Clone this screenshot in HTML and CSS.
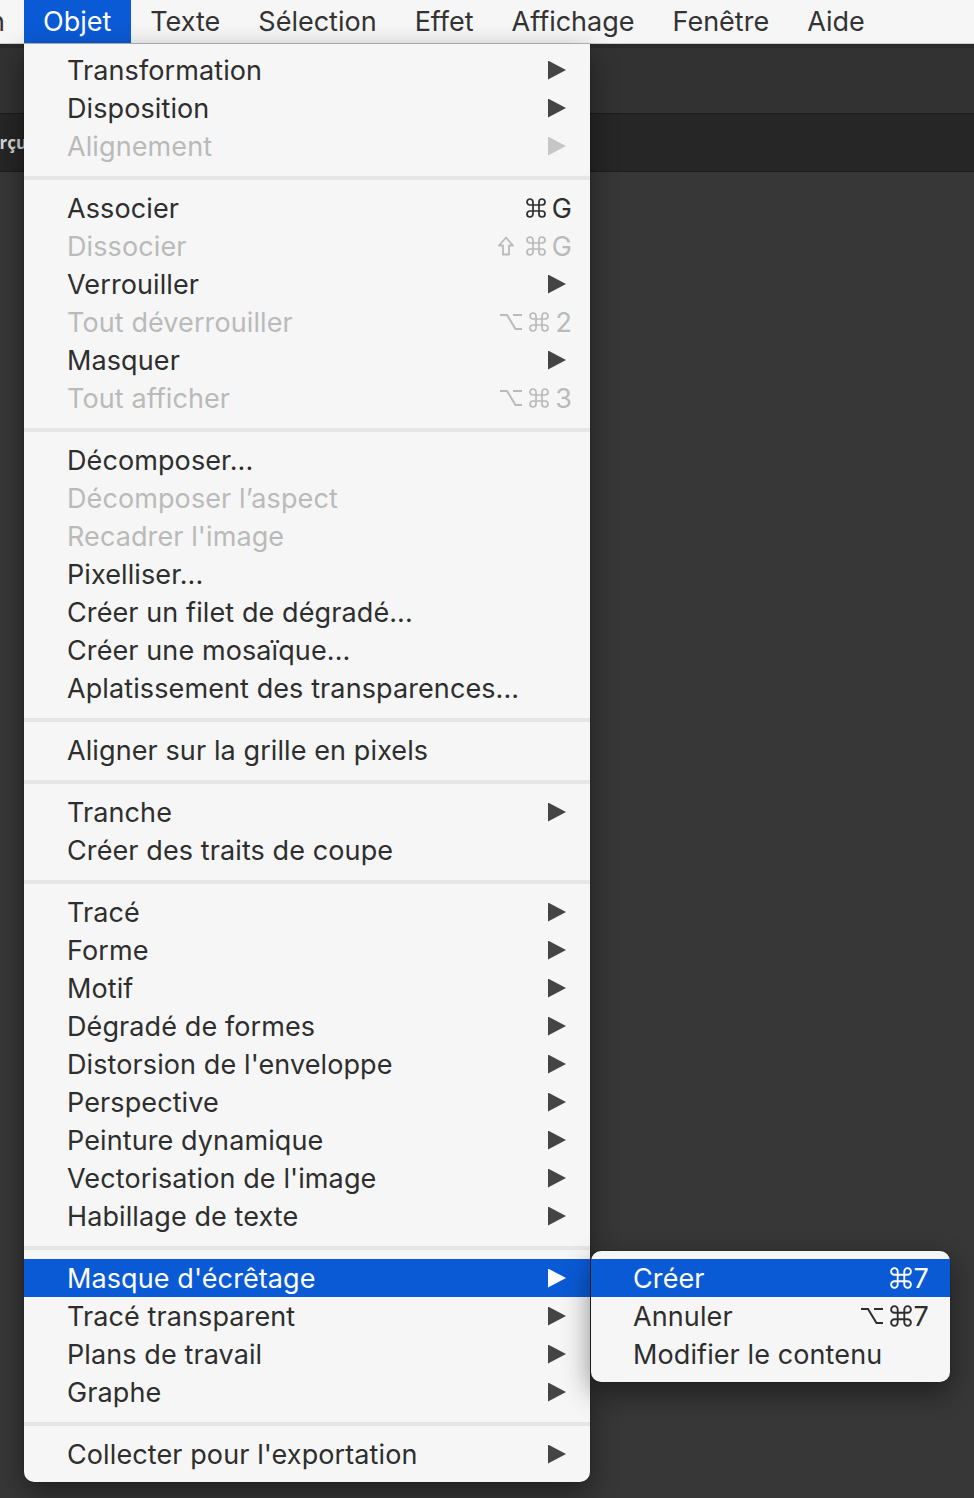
FILE: index.html
```html
<!DOCTYPE html>
<html lang="fr">
<head>
<meta charset="utf-8">
<title>Objet</title>
<link rel="stylesheet" href="styles.css">
</head>
<body>
<header class="menubar">
  <span class="mb-item mb-clipped"><span>Édition</span></span>
  <span class="mb-item active">Objet</span>
  <span class="mb-item">Texte</span>
  <span class="mb-item">Sélection</span>
  <span class="mb-item">Effet</span>
  <span class="mb-item">Affichage</span>
  <span class="mb-item">Fenêtre</span>
  <span class="mb-item">Aide</span>
</header>

<div class="workspace">
  <div class="control-edge"></div>
  <div class="control-bar"></div>
  <div class="tab-bar"><span class="tab-title">Aperçu GPU</span></div>
  <div class="canvas"></div>
</div>

<svg width="0" height="0" class="defs" aria-hidden="true">
  <defs>
    <symbol id="cmd" viewBox="-1 -1 20 20">
      <path d="M6 6 V3 A3 3 0 1 0 3 6 H15 A3 3 0 1 0 12 3 V15 A3 3 0 1 0 15 12 H3 A3 3 0 1 0 6 15 Z" fill="none" stroke="currentColor" stroke-width="1.7" stroke-linejoin="round"/>
    </symbol>
    <symbol id="opt" viewBox="0 0 24 18">
      <path d="M1 2 H8 L16.5 16 H23 M14 2 H23" fill="none" stroke="currentColor" stroke-width="2"/>
    </symbol>
    <symbol id="shift" viewBox="0 0 16 20">
      <path d="M8 1.5 L15 9.5 H11 V18.5 H5 V9.5 H1 Z" fill="none" stroke="currentColor" stroke-width="1.8" stroke-linejoin="round"/>
    </symbol>
  </defs>
</svg>

<nav class="dropdown">
  <div class="group">
    <div class="item"><span class="label">Transformation</span><span class="arrow"></span></div>
    <div class="item"><span class="label">Disposition</span><span class="arrow"></span></div>
    <div class="item disabled"><span class="label">Alignement</span><span class="arrow"></span></div>
  </div>
  <div class="sep"></div>
  <div class="group">
    <div class="item"><span class="label">Associer</span><span class="sc"><svg class="k-cmd"><use href="#cmd"/></svg><span class="key">G</span></span></div>
    <div class="item disabled"><span class="label">Dissocier</span><span class="sc"><svg class="k-shift"><use href="#shift"/></svg><svg class="k-cmd"><use href="#cmd"/></svg><span class="key">G</span></span></div>
    <div class="item"><span class="label">Verrouiller</span><span class="arrow"></span></div>
    <div class="item disabled"><span class="label">Tout déverrouiller</span><span class="sc"><svg class="k-opt"><use href="#opt"/></svg><svg class="k-cmd"><use href="#cmd"/></svg><span class="key">2</span></span></div>
    <div class="item"><span class="label">Masquer</span><span class="arrow"></span></div>
    <div class="item disabled"><span class="label">Tout afficher</span><span class="sc"><svg class="k-opt"><use href="#opt"/></svg><svg class="k-cmd"><use href="#cmd"/></svg><span class="key">3</span></span></div>
  </div>
  <div class="sep"></div>
  <div class="group">
    <div class="item"><span class="label">Décomposer...</span></div>
    <div class="item disabled"><span class="label">Décomposer l’aspect</span></div>
    <div class="item disabled"><span class="label">Recadrer l'image</span></div>
    <div class="item"><span class="label">Pixelliser...</span></div>
    <div class="item"><span class="label">Créer un filet de dégradé...</span></div>
    <div class="item"><span class="label">Créer une mosaïque...</span></div>
    <div class="item"><span class="label">Aplatissement des transparences...</span></div>
  </div>
  <div class="sep"></div>
  <div class="group">
    <div class="item"><span class="label">Aligner sur la grille en pixels</span></div>
  </div>
  <div class="sep"></div>
  <div class="group">
    <div class="item"><span class="label">Tranche</span><span class="arrow"></span></div>
    <div class="item"><span class="label">Créer des traits de coupe</span></div>
  </div>
  <div class="sep"></div>
  <div class="group">
    <div class="item"><span class="label">Tracé</span><span class="arrow"></span></div>
    <div class="item"><span class="label">Forme</span><span class="arrow"></span></div>
    <div class="item"><span class="label">Motif</span><span class="arrow"></span></div>
    <div class="item"><span class="label">Dégradé de formes</span><span class="arrow"></span></div>
    <div class="item"><span class="label">Distorsion de l'enveloppe</span><span class="arrow"></span></div>
    <div class="item"><span class="label">Perspective</span><span class="arrow"></span></div>
    <div class="item"><span class="label">Peinture dynamique</span><span class="arrow"></span></div>
    <div class="item"><span class="label">Vectorisation de l'image</span><span class="arrow"></span></div>
    <div class="item"><span class="label">Habillage de texte</span><span class="arrow"></span></div>
  </div>
  <div class="sep"></div>
  <div class="group">
    <div class="item selected has-sub"><span class="label">Masque d'écrêtage</span><span class="arrow"></span>
      <div class="submenu">
        <div class="item selected"><span class="label">Créer</span><span class="sc"><svg class="k-cmd wide"><use href="#cmd"/></svg><span class="key">7</span></span></div>
        <div class="item"><span class="label">Annuler</span><span class="sc"><svg class="k-opt"><use href="#opt"/></svg><svg class="k-cmd wide"><use href="#cmd"/></svg><span class="key">7</span></span></div>
        <div class="item"><span class="label">Modifier le contenu</span></div>
      </div>
    </div>
    <div class="item"><span class="label">Tracé transparent</span><span class="arrow"></span></div>
    <div class="item"><span class="label">Plans de travail</span><span class="arrow"></span></div>
    <div class="item"><span class="label">Graphe</span><span class="arrow"></span></div>
  </div>
  <div class="sep"></div>
  <div class="group">
    <div class="item"><span class="label">Collecter pour l'exportation</span><span class="arrow"></span></div>
  </div>
</nav>
</body>
</html>
```
FILE: styles.css
```css
* { box-sizing: border-box; }

html, body {
  margin: 0;
  height: 100%;
}

body {
  background: #363636;
  font-family: "Inter", "Roboto", "DejaVu Sans", sans-serif;
  overflow: hidden;
  position: relative;
}

.defs {
  position: absolute;
  width: 0;
  height: 0;
}

/* ---------- menu bar ---------- */
.menubar {
  height: 44px;
  display: flex;
  align-items: stretch;
  background: #f6f6f6;
  border-bottom: 1px solid #cfcfcf;
  font-size: 27px;
  color: #333;
  white-space: nowrap;
}

.mb-item {
  display: flex;
  align-items: center;
  padding: 0 19px;
  letter-spacing: 0;
}

.mb-clipped {
  width: 24px;
  padding: 0;
  overflow: hidden;
  justify-content: flex-end;
}
.mb-clipped span {
  padding-right: 19px;
}

.mb-item.active {
  background: #0b5ad5;
  color: #fff;
  padding: 0 20px 0 19px;
}

/* ---------- workspace behind the menu ---------- */
.workspace {
  display: flex;
  flex-direction: column;
  height: calc(100% - 44px);
}

.control-edge {
  height: 4px;
  background: #2a2a2a;
}

.control-bar {
  height: 66px;
  background: #323232;
  border-bottom: 1px solid #1d1d1d;
}

.tab-bar {
  height: 58px;
  background: #262626;
  border-bottom: 1px solid #1d1d1d;
  display: flex;
  align-items: center;
  color: #d6d6d6;
  font-family: "Open Sans", "DejaVu Sans", sans-serif;
  font-weight: 700;
  font-size: 17px;
  white-space: nowrap;
  overflow: hidden;
}

.tab-title {
  text-indent: -33px;
}

.canvas {
  flex: 1;
  background: #373737;
}

/* ---------- dropdown ---------- */
.dropdown {
  position: absolute;
  top: 44px;
  left: 24px;
  width: 566px;
  padding: 7px 0 9px;
  background: #f6f6f6;
  border-radius: 0 0 10px 10px;
  box-shadow: 0 10px 28px rgba(0, 0, 0, 0.45), 0 0 0 0.5px rgba(0, 0, 0, 0.2);
  font-size: 27px;
  color: #2e2e2e;
}

.sep {
  height: 4px;
  margin: 11px 0 9px;
  background: #e6e6e6;
}

.item {
  position: relative;
  height: 38px;
  display: flex;
  align-items: center;
  justify-content: space-between;
  padding: 0 18px 0 43px;
  white-space: nowrap;
  letter-spacing: 0.1px;
}

.item.disabled {
  color: #bababa;
}

.item.selected {
  background: #0b5ad5;
  color: #fff;
}

.arrow {
  width: 18px;
  height: 19px;
  margin-right: 6px;
  background: #444;
  clip-path: polygon(0 0, 100% 50%, 0 100%);
}

.disabled .arrow {
  background: #c6c6c6;
}

.selected > .arrow {
  background: #fff;
}

.sc {
  display: flex;
  align-items: center;
}

.sc svg {
  display: block;
  flex: none;
}

.k-cmd {
  width: 20px;
  height: 20px;
  margin-right: 6px;
}

.k-cmd.wide {
  width: 22px;
  height: 22px;
  margin-right: 2px;
}

.k-shift {
  width: 16px;
  height: 20px;
  margin-right: 12px;
}

.k-opt {
  width: 24px;
  height: 18px;
  margin-right: 6px;
}

.key {
  line-height: 1;
}

/* ---------- submenu ---------- */
.submenu {
  position: absolute;
  top: -8px;
  left: calc(100% + 1px);
  width: 359px;
  padding: 8px 0 9px;
  background: #f6f6f6;
  border-radius: 10px;
  box-shadow: 0 10px 28px rgba(0, 0, 0, 0.45), 0 0 0 0.5px rgba(0, 0, 0, 0.2);
  color: #2e2e2e;
}

.submenu .item {
  padding: 0 21px 0 42px;
}

.submenu .item.selected {
  color: #fff;
}
```
